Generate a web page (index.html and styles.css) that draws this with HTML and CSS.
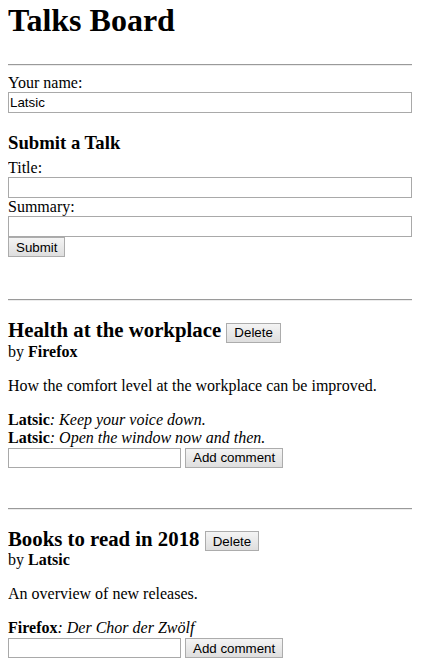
FILE: index.html
```html
<!DOCTYPE html>
<html lang="en">
<head>
<meta charset="utf-8">
<title>Talks Board</title>
<link rel="stylesheet" href="styles.css">
</head>
<body>
<h1 class="page-title">Talks Board</h1>
<hr class="rule">
<label class="field-label" for="name">Your name:</label>
<input class="text-input" id="name" type="text" value="Latsic">

<form class="talk-form">
  <h3 class="form-title">Submit a Talk</h3>
  <label class="field-label" for="title">Title:</label>
  <input class="text-input" id="title" type="text">
  <label class="field-label" for="summary">Summary:</label>
  <input class="text-input" id="summary" type="text">
  <button class="btn btn-block" type="button">Submit</button>
</form>

<hr class="rule">
<section class="talk">
  <h2 class="talk-title">Health at the workplace <button class="btn" type="button">Delete</button></h2>
  <div class="talk-author">by <strong>Firefox</strong></div>
  <p class="talk-summary">How the comfort level at the workplace can be improved.</p>
  <div class="comment"><strong>Latsic</strong><em>: Keep your voice down.</em></div>
  <div class="comment"><strong>Latsic</strong><em>: Open the window now and then.</em></div>
  <form class="comment-form">
    <input class="comment-input" type="text">
    <button class="btn" type="button">Add comment</button>
  </form>
</section>

<hr class="rule">
<section class="talk">
  <h2 class="talk-title">Books to read in 2018 <button class="btn" type="button">Delete</button></h2>
  <div class="talk-author">by <strong>Latsic</strong></div>
  <p class="talk-summary">An overview of new releases.</p>
  <div class="comment"><strong>Firefox</strong><em>: Der Chor der Zwölf</em></div>
  <form class="comment-form">
    <input class="comment-input" type="text">
    <button class="btn" type="button">Add comment</button>
  </form>
</section>
</body>
</html>
```

FILE: styles.css
```css
html {
  background: #ffffff;
}

body {
  margin: 0 16px 0 8px;
  font-family: "Liberation Serif", "Times New Roman", serif;
  font-size: 16px;
  color: #000000;
}

.page-title {
  font-size: 32px;
  font-weight: bold;
  margin: 2px 0 25px;
}

.rule {
  height: 0;
  margin: 0 0 8px;
  border: 0;
  border-top: 1px solid #9a9a9a;
  border-bottom: 1px solid #ececec;
}

.field-label {
  display: block;
}

.text-input {
  display: block;
  width: 100%;
  box-sizing: border-box;
  height: 21px;
  margin: 0;
  padding: 1px 1px;
  border: 1px solid #a9a9a9;
  font-family: "Liberation Sans", Arial, sans-serif;
  font-size: 13.33px;
  color: #000000;
  background: #ffffff;
}

.talk-form {
  margin: 0 0 42px;
}

.form-title {
  font-size: 18.72px;
  font-weight: bold;
  margin: 19px 0 5px;
}

.btn {
  box-sizing: border-box;
  height: 20px;
  margin: 0;
  padding: 0 7px;
  border: 1px solid #acacac;
  border-radius: 0;
  background: linear-gradient(#f4f4f4, #dedede);
  font-family: "Liberation Sans", Arial, sans-serif;
  font-size: 13.33px;
  color: #000000;
  vertical-align: baseline;
}

.btn-block {
  display: block;
}

.talk {
  margin: 0 0 40px;
}

.talk:last-child {
  margin-bottom: 0;
}

.talk-title {
  font-size: 20.8px;
  font-weight: bold;
  margin: 17px 0 0;
}

.talk-author {
  margin: 0;
}

.talk-summary {
  margin: 16px 0;
}

.comment em {
  font-style: italic;
}

.comment-form {
  display: flex;
  align-items: center;
  gap: 4px;
  margin: 1px 0 0;
}

.comment-input {
  box-sizing: border-box;
  width: 173px;
  height: 20px;
  margin: 0;
  padding: 1px;
  border: 1px solid #a9a9a9;
  font-family: "Liberation Sans", Arial, sans-serif;
  font-size: 13.33px;
  background: #ffffff;
}
```
